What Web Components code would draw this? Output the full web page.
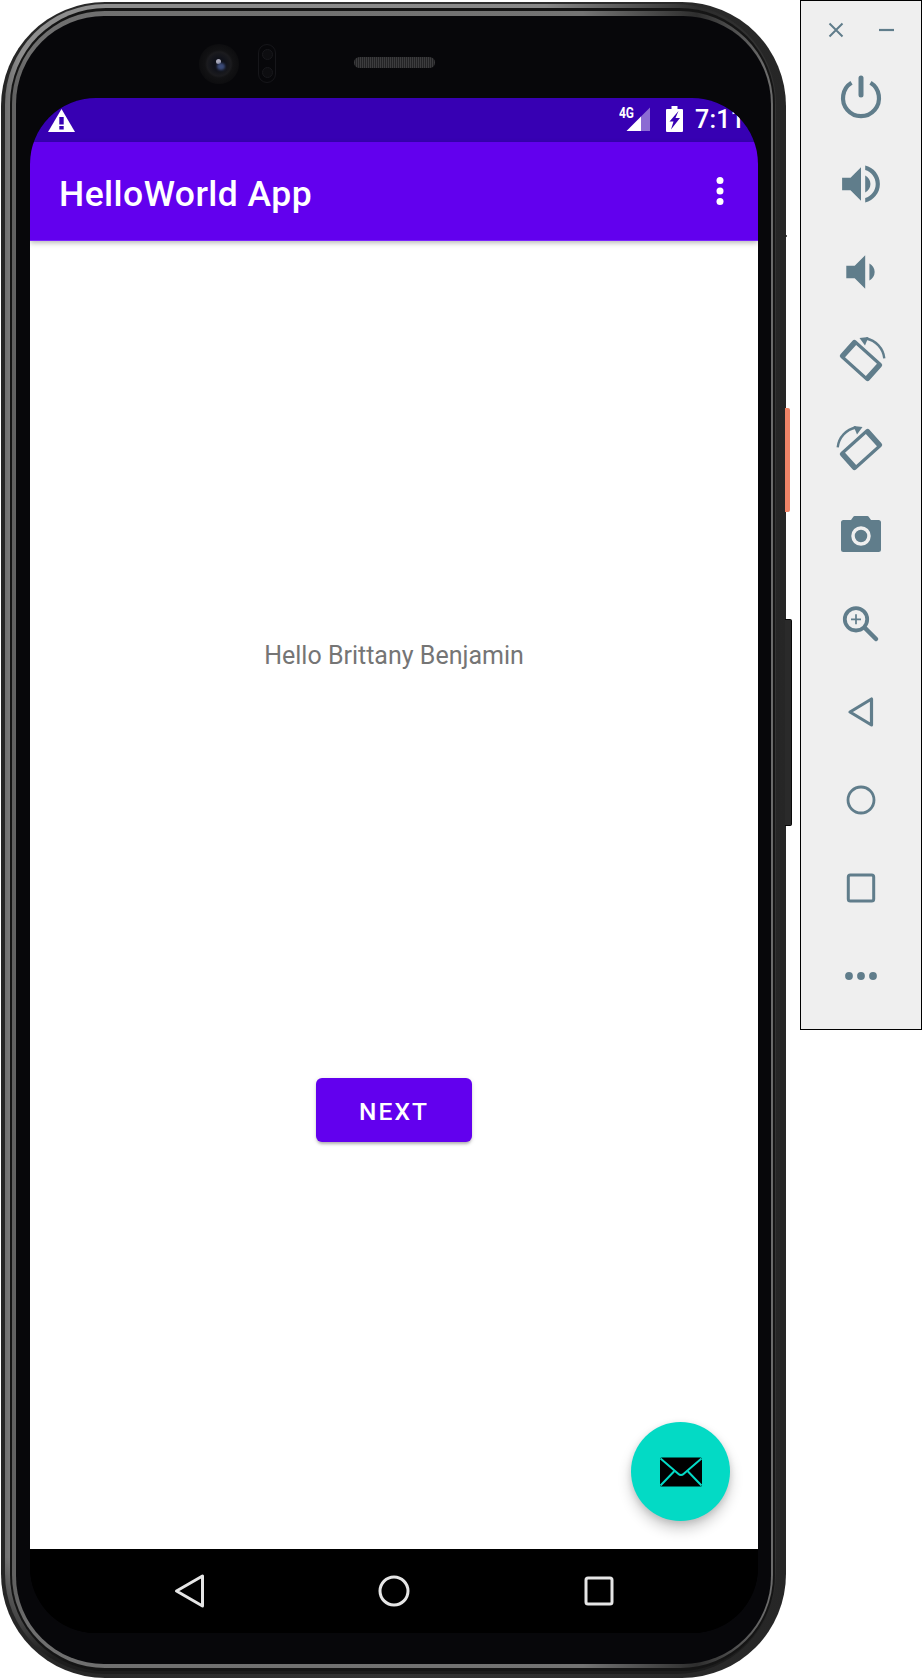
<!DOCTYPE html>
<html lang="en"><head><meta charset="utf-8"><title>HelloWorld App</title>
<style>
html,body{margin:0;padding:0;background:#fff}
body{width:922px;height:1680px;overflow:hidden}
</style></head>
<body>
<app-page>
  <phone-device>
    <phone-screen>
      <status-bar></status-bar>
      <app-toolbar>HelloWorld App</app-toolbar>
      <content-area>
        <span slot="text">Hello Brittany Benjamin</span>
        <span slot="button">NEXT</span>
      </content-area>
      <nav-bar></nav-bar>
    </phone-screen>
  </phone-device>
  <emu-panel></emu-panel>
</app-page>
<script>
function def(name, html){
  customElements.define(name, class extends HTMLElement{
    constructor(){super();this.attachShadow({mode:'open'}).innerHTML=html;}
  });
}
def('app-page',`<style>:host{display:flex;align-items:flex-start;width:922px;height:1680px}</style><slot></slot>`);

def('phone-device',`<style>
:host{display:block;position:relative;width:785px;height:1676px;margin:2px 0 0 1px;flex:none}
.r{box-sizing:border-box}
.r1{position:relative;height:100%;padding:2px 10px 4px 4px;border-radius:104px;background:linear-gradient(90deg,#252525,#333 50%,#262626)}
.r2{height:100%;padding:4px 1px 3px 5px;border-radius:100px;background:linear-gradient(180deg,rgba(25,25,25,0) 93%,#1d1d1d 99%),linear-gradient(90deg,#6e6e6e 0,#8e8e8e 2%,#888 70%,#2c2c2c 90%,#333 100%)}
.r3{height:100%;padding:3px 2px 3px 2px;border-radius:96px;background:#151515}
.r4{height:100%;padding:5px 2px 4px 4px;border-radius:93px;background:linear-gradient(90deg,#5f5f5f 0,#6f6f6f 2%,#737373 75%,#2e2e2e 90%,#6b6b6b 99%)}
.r5{height:100%;padding:0 13px 31px 14px;border-radius:88px;background:#07070a;display:flex;flex-direction:column}
.top{flex:none;height:82px;display:flex;align-items:flex-start;position:relative}
.cam{flex:none;width:40px;height:40px;margin:28px 0 0 169px;border-radius:50%;background:radial-gradient(circle at 50% 50%,#10121a 0 6px,#1b1b1e 12px,#121214 14px,#0d0d0f 20px);position:relative}
.cam::before{content:"";position:absolute;left:17px;top:15px;width:5px;height:5px;border-radius:50%;background:#aab}
.cam::after{content:"";position:absolute;left:18px;top:19px;width:8px;height:7px;border-radius:50%;background:#3a4a78;filter:blur(1px)}
.sensor{flex:none;box-sizing:border-box;width:18px;height:39px;margin:28px 0 0 19px;border:1.5px solid #16161a;border-radius:9px;display:flex;flex-direction:column;align-items:center;justify-content:space-around}
.sensor i{display:block;width:11px;height:11px;border-radius:50%;background:#0d0d10;border:1px solid #18181c;box-sizing:border-box}
.spk{flex:none;width:81px;height:11px;margin:41px 0 0 78px;border-radius:6px;background:repeating-linear-gradient(90deg,#3c3c3e 0 1px,#232325 1px 2px)}
.slot{flex:1;min-height:0}
.b{position:absolute;left:784px;border-radius:0 2px 2px 0}
.orange{top:406px;height:104px;width:5px;background:#ef8467}
.black{top:617px;height:207px;width:7px;background:#2a2a2a;border:0 solid #0a0a0a;border-width:1px 1px 1px 0;box-sizing:border-box}
.mark{top:233px;height:2px;width:2px;background:#222}
</style>
<div class="r r1"><div class="r r2"><div class="r r3"><div class="r r4"><div class="r r5">
  <div class="top"><div class="cam"></div><div class="sensor"><i></i><i></i></div><div class="spk"></div></div>
  <div class="slot"><slot></slot></div>
</div></div></div></div></div>
<div class="b orange"></div><div class="b black"></div><div class="b mark"></div>`);

def('phone-screen',`<style>:host{display:flex;flex-direction:column;height:100%;width:728px;border-radius:66px;overflow:hidden;background:#000;font-family:Roboto,sans-serif}</style><slot></slot>`);

def('status-bar',`<style>
:host{display:flex;align-items:center;flex:none;height:44px;background:#3700b3;color:#fff;position:relative;z-index:1}
svg{display:block;flex:none}
.warn{margin-left:18px;margin-top:1px}
.sig{margin-left:auto;margin-top:-2px}
.bat{margin-left:15px;margin-top:-2px}
.time{margin-left:12px;width:63px;flex:none;font-size:25px;font-weight:500;line-height:44px;letter-spacing:.2px;white-space:nowrap}
</style>
<svg class="warn" width="27" height="23" viewBox="0 0 27 23"><path fill="#fff" d="M13.5 0 27 23H0Z"/><path fill="#3700b3" d="M11.3 8h4.4v7.500h-4.400zM11.3 17h4.400v3.500h-4.400z"/></svg>
<svg class="sig" width="32" height="26" viewBox="0 0 32 26"><path fill="#fff" d="M7.500 25 22 10.500V25Z"/><path fill="#fff" opacity=".42" d="M22 10.500 31 1.500V25H22Z"/><text x="0" y="12" font-family="Roboto,sans-serif" font-size="14" font-weight="700" fill="#fff" textLength="15" lengthAdjust="spacingAndGlyphs">4G</text></svg>
<svg class="bat" width="17" height="26" viewBox="0 0 17 26"><path fill="#fff" d="M5.500 0h6v3H16a1 1 0 0 1 1 1v21a1 1 0 0 1-1 1H1a1 1 0 0 1-1-1V4a1 1 0 0 1 1-1h4.500Z"/><path fill="#3700b3" d="M12.500 5 3.500 15.500H7.500L5 23.500 14 12H9.500Z"/></svg>
<span class="time">7:11</span>`);

def('app-toolbar',`<style>
:host{display:flex;align-items:center;flex:none;box-sizing:border-box;height:99px;padding:0 0 1px 29px;background:#6200ee;color:#fff;font-size:35.500px;font-weight:500;letter-spacing:.44px;position:relative;z-index:1;border-bottom:1px solid #7a22ff;box-shadow:0 2px 5px rgba(0,0,0,.28)}
.t{flex:1;margin-top:7px}
svg{display:block;margin-right:34px;margin-top:0}
</style><span class="t"><slot></slot></span>
<svg width="8" height="28" viewBox="0 0 8 28"><circle cx="4" cy="3.500" r="3.500" fill="#fff"/><circle cx="4" cy="14" r="3.500" fill="#fff"/><circle cx="4" cy="24.500" r="3.500" fill="#fff"/></svg>`);

def('content-area',`<style>
:host{display:flex;flex-direction:column;align-items:center;flex:1;min-height:0;position:relative;background:#fff;padding-top:400px;box-sizing:border-box}
.txt{font-size:25px;line-height:30px;color:#757575;white-space:nowrap}
.btn{margin-top:407px;box-sizing:border-box;width:156px;height:64px;padding-top:2px;border-radius:6px;background:#6200ee;color:#fff;display:flex;align-items:center;justify-content:center;font-size:24.500px;font-weight:500;letter-spacing:2.100px;box-shadow:0 3px 3px -1px rgba(0,0,0,.25),0 1px 5px rgba(0,0,0,.12)}
.fab{position:absolute;right:28px;bottom:28px;width:99px;height:99px;border-radius:50%;background:#03dac5;display:flex;align-items:center;justify-content:center;box-shadow:0 8px 14px rgba(0,0,0,.2),0 2px 6px rgba(0,0,0,.12)}
svg{display:block}
</style>
<div class="txt"><slot name="text"></slot></div>
<div class="btn"><slot name="button"></slot></div>
<div class="fab"><svg width="44" height="30" viewBox="0 0 44 30"><rect x="1" y="0.500" width="42" height="29" rx="1.500" fill="#000"/><path fill="none" stroke="#03dac5" stroke-width="2" d="M1.500 1.500 19.500 17a3.500 3.500 0 0 0 5 0L42.500 1.500M1.500 28.500 15 14.500M42.500 28.500 29 14.500"/></svg></div>`);

def('nav-bar',`<style>
:host{display:flex;justify-content:center;align-items:center;flex:none;height:84px;background:#000}
div{width:205px;display:flex;justify-content:center}
svg{display:block}
</style>
<div><svg width="34" height="36" viewBox="0 0 34 36"><path d="M4.500 18 30.500 3V33Z" fill="none" stroke="#e6e6e6" stroke-width="3" stroke-linejoin="round"/></svg></div>
<div><svg width="34" height="34" viewBox="0 0 34 34"><circle cx="17" cy="17" r="14" fill="none" stroke="#e6e6e6" stroke-width="3"/></svg></div>
<div><svg width="34" height="34" viewBox="0 0 34 34"><rect x="4" y="4" width="26" height="26" rx="2" fill="none" stroke="#e6e6e6" stroke-width="3"/></svg></div>`);

const C='#607d8b';
const phone=`<path fill-rule="evenodd" fill="${C}" d="M-17-11.500H17a2.500 2.500 0 0 1 2.500 2.500V9A2.500 2.500 0 0 1 17 11.500H-17A2.500 2.500 0 0 1-19.500 9V-9A2.500 2.500 0 0 1-17-11.500ZM-14-8.300V8.300H14V-8.300Z" transform="translate(25 25.500) rotate(42)"/><path d="M30 3.500A22.500 22.500 0 0 1 48.300 23.300" fill="none" stroke="${C}" stroke-width="2.400"/><path d="M23.500 3 32.500 2 29 10.500Z" fill="${C}"/>`;
const icons={
 power:`<path d="M15.500 11.800A18 18 0 1 0 34.500 11.800" fill="none" stroke="${C}" stroke-width="4.200"/><path d="M25 7v17" stroke="${C}" stroke-width="5" stroke-linecap="round"/>`,
 volup:`<g transform="translate(-.2 -.2) scale(2.100)"><path fill="${C}" d="M3 9v6h4l5 5V4L7 9H3zm13.500 3c0-1.770-1.020-3.290-2.500-4.030v8.050c1.480-.730 2.500-2.250 2.500-4.020zM14 3.230v2.060c2.890.860 5 3.540 5 6.710s-2.110 5.850-5 6.710v2.060c4.010-.910 7-4.490 7-8.770s-2.990-7.860-7-8.770z"/></g>`,
 voldown:`<g transform="translate(-.2 -.2) scale(2.100)"><path fill="${C}" d="M18.500 12c0-1.770-1.020-3.290-2.500-4.030v8.050c1.480-.730 2.500-2.250 2.500-4.020zM5 9v6h4l5 5V4L9 9H5z"/></g>`,
 rot1:phone,
 rot2:`<g transform="translate(50 1) scale(-1 1)">${phone}</g>`,
 camera:`<path fill="${C}" d="M15 9l2.500-3.500a1.500 1.500 0 0 1 1.200-.5h12.600a1.500 1.500 0 0 1 1.200.5L35 9h7.500A2.500 2.500 0 0 1 45 11.500v27a2.500 2.500 0 0 1-2.500 2.500h-35A2.500 2.500 0 0 1 5 38.500v-27A2.500 2.500 0 0 1 7.500 9Z"/><circle cx="25" cy="25" r="8" fill="none" stroke="#efefef" stroke-width="3.500"/>`,
 zoom:`<circle cx="20" cy="20.300" r="11.200" fill="none" stroke="${C}" stroke-width="3.800"/><path d="M29 29 40 40" stroke="${C}" stroke-width="4.500" stroke-linecap="round"/><path d="M15 20.300H25M20 15.300V25.300" stroke="${C}" stroke-width="1.700"/>`,
 back:`<path d="M14 25 35.500 12V38Z" fill="none" stroke="${C}" stroke-width="3.200" stroke-linejoin="round"/>`,
 home:`<circle cx="25" cy="25" r="13" fill="none" stroke="${C}" stroke-width="2.800"/>`,
 square:`<rect x="12.300" y="12" width="25.400" height="26" rx="2" fill="none" stroke="${C}" stroke-width="3"/>`,
 more:`<circle cx="13" cy="25" r="3.900" fill="${C}"/><circle cx="25" cy="25" r="3.900" fill="${C}"/><circle cx="37" cy="25" r="3.900" fill="${C}"/>`
};
customElements.define('emu-button',class extends HTMLElement{
  constructor(){super();this.attachShadow({mode:'open'}).innerHTML=`<style>:host{display:flex;align-items:center;justify-content:center;height:88px;flex:none}svg{display:block}</style><svg width="50" height="50" viewBox="0 0 50 50"></svg>`;}
  connectedCallback(){this.shadowRoot.querySelector('svg').innerHTML=icons[this.getAttribute('icon')];}
});
def('emu-panel',`<style>
:host{display:block;box-sizing:border-box;width:122px;height:1030px;margin-left:14px;flex:none;background:#efefef;border:1.500px solid #000;border-right-width:1px}
.head{display:flex;justify-content:space-between;align-items:center;height:51px;padding:6px 27px 0 27px;box-sizing:border-box}
svg{display:block}
.list{display:flex;flex-direction:column}
</style>
<div class="head">
<svg width="16" height="16" viewBox="0 0 16 16"><path d="M1.500 1.500 14.500 14.500M14.500 1.500 1.500 14.500" stroke="${C}" stroke-width="2"/></svg>
<svg width="15" height="16" viewBox="0 0 15 16"><path d="M0 8H15" stroke="${C}" stroke-width="2.200"/></svg>
</div>
<div class="list">
<emu-button icon="power"></emu-button><emu-button icon="volup"></emu-button><emu-button icon="voldown"></emu-button>
<emu-button icon="rot1"></emu-button><emu-button icon="rot2"></emu-button><emu-button icon="camera"></emu-button>
<emu-button icon="zoom"></emu-button><emu-button icon="back"></emu-button><emu-button icon="home"></emu-button>
<emu-button icon="square"></emu-button><emu-button icon="more"></emu-button>
</div>`);
</script>
</body></html>
